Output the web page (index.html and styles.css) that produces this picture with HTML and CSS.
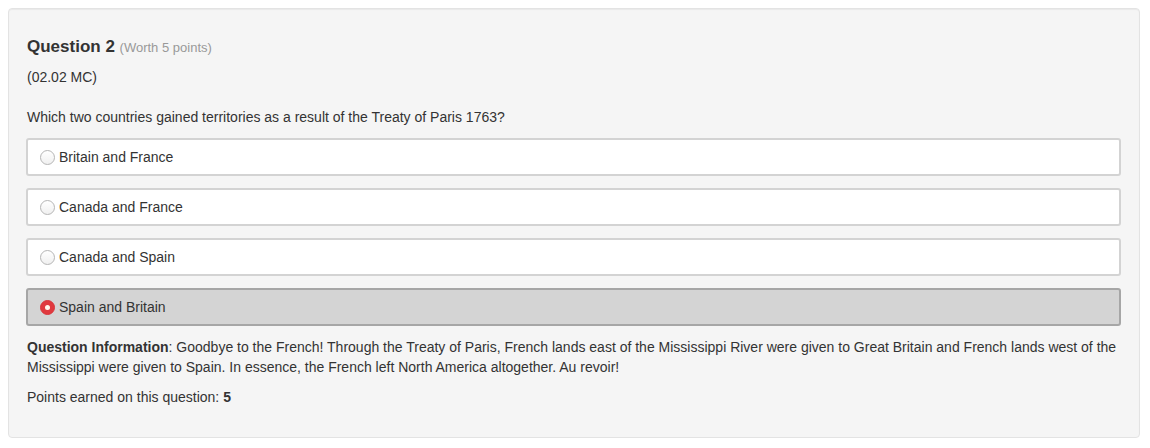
FILE: index.html
```html
<!DOCTYPE html>
<html>
<head>
<meta charset="utf-8">
<link rel="stylesheet" href="styles.css">
</head>
<body>
<div class="panel">
  <h4 class="title">Question 2 <small class="worth">(Worth 5 points)</small></h4>
  <p class="code">(02.02 MC)</p>
  <p class="prompt">Which two countries gained territories as a result of the Treaty of Paris 1763?</p>
  <div class="options">
    <label class="option"><span class="radio"></span><span class="label">Britain and France</span></label>
    <label class="option"><span class="radio"></span><span class="label">Canada and France</span></label>
    <label class="option"><span class="radio"></span><span class="label">Canada and Spain</span></label>
    <label class="option selected"><span class="radio checked"></span><span class="label">Spain and Britain</span></label>
  </div>
  <p class="info"><strong>Question Information</strong>: Goodbye to the French! Through the Treaty of Paris, French lands east of the Mississippi River were given to Great Britain and French lands west of the Mississippi were given to Spain. In essence, the French left North America altogether. Au revoir!</p>
  <p class="points">Points earned on this question: <strong>5</strong></p>
</div>
</body>
</html>
```

FILE: styles.css
```css
html, body {
  background: #ffffff;
}
body {
  margin: 8px 10px 0 8px;
  font-family: "Liberation Sans", Arial, sans-serif;
  font-size: 14px;
  line-height: 20px;
  color: #333333;
}
.panel {
  background: #f5f5f5;
  border: 1px solid #e3e3e3;
  border-radius: 4px;
  box-shadow: inset 0 1px 1px rgba(0,0,0,0.05);
  padding: 18px 18px 30px 17px;
}
.title {
  margin: 10px 0 0 1px;
  font-size: 17px;
  line-height: 20px;
  font-weight: bold;
  color: #333;
}
.worth {
  font-size: 13px;
  font-weight: normal;
  color: #999999;
}
.code {
  margin: 9px 0 0 1px;
}
.prompt {
  margin: 20px 0 0 1px;
}
.options {
  margin-top: 11px;
  display: flex;
  flex-direction: column;
  gap: 12px;
}
.option {
  display: flex;
  align-items: center;
  height: 38px;
  box-sizing: border-box;
  border: 2px solid #d3d3d3;
  border-radius: 3px;
  background: #ffffff;
  padding: 0 12px;
}
.option.selected {
  background: #d4d4d4;
  border-color: #a6a6a6;
}
.radio {
  width: 13px;
  height: 13px;
  border-radius: 50%;
  border: 1px solid #b5b5b5;
  background: linear-gradient(#ffffff, #f0f0f0);
  margin-right: 4px;
  display: flex;
  align-items: center;
  justify-content: center;
  flex: none;
}
.radio.checked {
  background: #e0393e;
  border-color: #d9363b;
}
.radio.checked::after {
  content: "";
  width: 5px;
  height: 5px;
  border-radius: 50%;
  background: #fff8ee;
}
.info {
  margin: 11px 0 0 1px;
}
.points {
  margin: 10px 0 0 1px;
}
```
